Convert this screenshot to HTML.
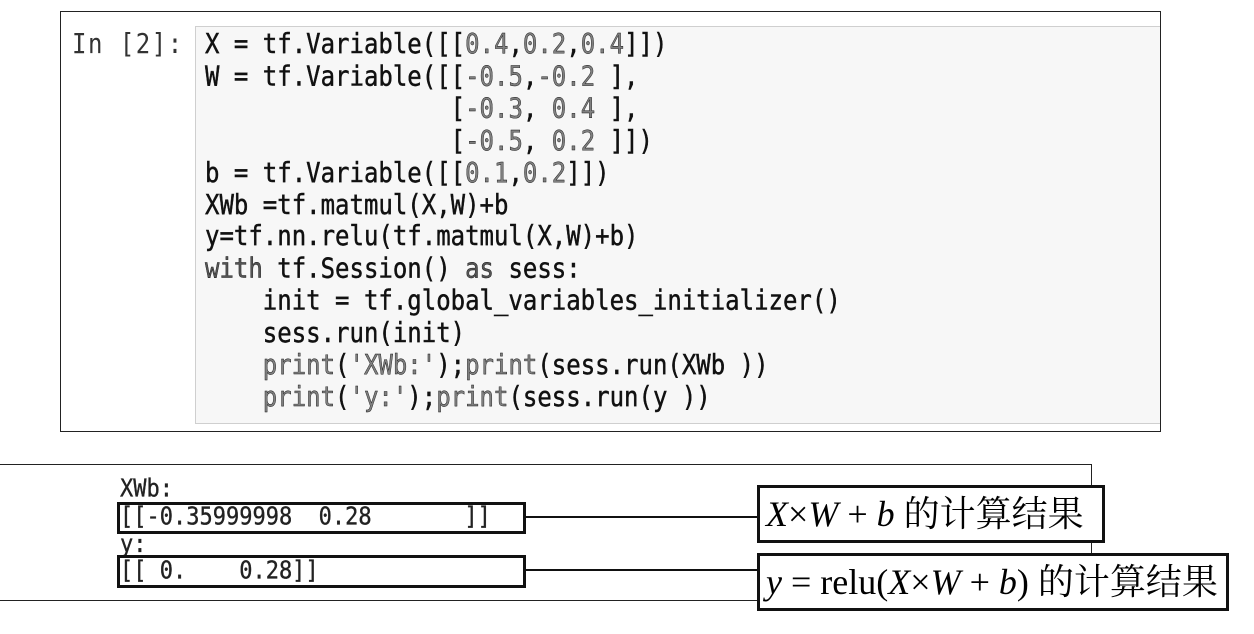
<!DOCTYPE html>
<html><head><meta charset="utf-8"><style>
body{margin:0;width:1254px;height:634px;background:#fff;position:relative;overflow:hidden}
.a{position:absolute}
pre{margin:0;font-family:"DejaVu Sans Mono","Liberation Mono",monospace}
.n{color:#808080}
</style></head><body>
<div class="a" style="left:60px;top:11px;width:1099px;height:419px;border:1px solid #222"></div>
<div class="a" style="left:195px;top:26px;width:964px;height:396px;background:#f7f7f7;border:1px solid #cfcfcf;border-right:none"></div>
<pre class="a" style="left:72px;top:29px;font-size:24px;letter-spacing:1.5px;color:#333;transform:scaleY(1.15);transform-origin:0 0;line-height:27.9px">In [2]:</pre>
<pre class="a" style="left:205px;top:29px;font-size:24px;line-height:27.9px;color:#111;transform:scaleY(1.15);transform-origin:0 0;-webkit-text-stroke:0.4px #111">X = tf.Variable([[<span class="n">0.4</span>,<span class="n">0.2</span>,<span class="n">0.4</span>]])
W = tf.Variable([[<span class="n">-0.5</span>,<span class="n">-0.2</span> ],
                 [<span class="n">-0.3</span>, <span class="n">0.4</span> ],
                 [<span class="n">-0.5</span>, <span class="n">0.2</span> ]])
b = tf.Variable([[<span class="n">0.1</span>,<span class="n">0.2</span>]])
XWb =tf.matmul(X,W)+b
y=tf.nn.relu(tf.matmul(X,W)+b)
<span style="color:#555">with</span> tf.Session() <span style="color:#555">as</span> sess:
    init = tf.global_variables_initializer()
    sess.run(init)
    <span class="n">print</span>(<span class="n">'XWb:'</span>);<span class="n">print</span>(sess.run(XWb ))
    <span class="n">print</span>(<span class="n">'y:'</span>);<span class="n">print</span>(sess.run(y ))</pre>

<div class="a" style="left:0;top:464px;width:1091px;height:135px;border:1px solid #222;border-left:none"></div>
<pre class="a" style="left:120px;top:476px;font-size:22px;line-height:23.8px;color:#222;transform:scaleY(1.15);transform-origin:0 0;-webkit-text-stroke:0.3px #222">XWb:
[[-0.35999998  0.28       ]]
y:
[[ 0.    0.28]]</pre>
<div class="a" style="left:117px;top:502px;width:403px;height:26px;border:3px solid #111"></div>
<div class="a" style="left:117px;top:555px;width:403px;height:27px;border:3px solid #111"></div>
<div class="a" style="left:523px;top:516px;width:236px;height:2px;background:#111"></div>
<div class="a" style="left:523px;top:569px;width:236px;height:2px;background:#111"></div>
<div class="a" style="left:757px;top:485px;width:336px;height:52px;border:3px solid #111;background:#fff;font:36px/52px 'Liberation Serif','Noto Serif CJK SC',serif;padding-left:6px;box-sizing:content-box;white-space:nowrap"><i>X</i>×<i>W</i> + <i>b</i> 的计算结果</div>
<div class="a" style="left:757px;top:553px;width:460px;height:52px;border:3px solid #111;background:#fff;font:36px/52px 'Liberation Serif','Noto Serif CJK SC',serif;padding-left:6px;box-sizing:content-box;white-space:nowrap"><i>y</i> = relu(<i>X</i>×<i>W</i> + <i>b</i>) 的计算结果</div>
</body></html>
